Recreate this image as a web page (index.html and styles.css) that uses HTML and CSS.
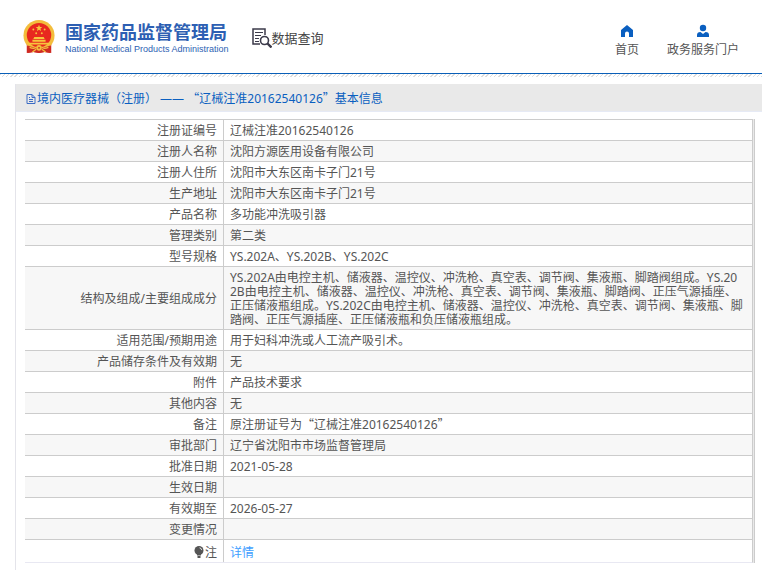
FILE: index.html
```html
<!DOCTYPE html>
<html lang="zh-CN">
<head>
  <meta charset="UTF-8">
  <title>国家药品监督管理局 - 数据查询</title>
  <meta name="viewport" content="width=device-width, initial-scale=1">
  <link rel="stylesheet" href="styles.css">
</head>
<body>

  <header class="header">
    <a class="logo" href="#">
      <svg class="emblem" viewBox="0 0 34 36" aria-hidden="true">
        <path fill="#cf2a22" d="M4 23h26v12l-7-1-6 1-6-1-7 1z"/>
        <circle cx="17" cy="16.500" r="16.500" fill="#f3bd3c"/>
        <circle cx="17" cy="16" r="13" fill="#e8281f"/>
        <path fill="#f7c53d" d="M17 5l1 2.400 2.500.1-2 1.600.7 2.500-2.200-1.400-2.200 1.400.7-2.500-2-1.600 2.500-.1z"/>
        <g fill="#f7c53d">
          <circle cx="11" cy="10" r="1"/><circle cx="23" cy="10" r="1"/>
          <circle cx="14" cy="14" r="1"/><circle cx="20" cy="14" r="1"/>
          <path d="M12 18h10l1 2H11zM10 21h14v2H10zM6 24h22v2H6z"/>
        </g>
        <path fill="#cf2a22" d="M5 27q6 3 12 1 6 2 12-1v8l-6-1-6 1-6-1-6 1z"/>
        <path fill="none" stroke="#f3bd3c" stroke-width="1.500" d="M7 29q5 2 7 0M27 29q-5 2-7 0M10 34l4-3M24 34l-4-3"/>
        <circle cx="17" cy="29.500" r="3" fill="#f3bd3c"/>
        <circle cx="17" cy="29.500" r="1" fill="#cf2a22"/>
      </svg>
      <span class="logo-text">
        <span class="logo-cn">国家药品监督管理局</span>
        <span class="logo-en">National Medical Products Administration</span>
      </span>
    </a>
    <a class="search" href="#">
      <svg class="search-icon" viewBox="0 0 20 20" fill="none" stroke="#3b3a4a" aria-hidden="true">
        <path stroke-width="1.500" d="M8 16H1V1h12v6"/>
        <path d="M3 4.500h8M3 7.500h6M3 10.500h4M3 13.500h4"/>
        <circle cx="12.500" cy="12.500" r="4" stroke-width="1.600"/>
        <path stroke-width="2.400" d="M15.500 15.500l4 4"/>
      </svg>
      数据查询
    </a>
    <nav class="nav">
      <a href="#">
        <svg viewBox="0 0 14 14" fill="#0a5fc0" aria-hidden="true"><path d="M7 1l6 5v7H9V9.500a2 2 0 0 0-4 0V13H1V6z"/></svg>
        首页
      </a>
      <a href="#">
        <svg viewBox="0 0 14 14" fill="#0a5fc0" aria-hidden="true"><circle cx="7" cy="4" r="3.200"/><path d="M1 13v-2q0-3 3.500-3L7 10l2.500-2Q13 8 13 11v2z"/></svg>
        政务服务门户
      </a>
    </nav>
  </header>
  <div class="stripes"></div>

  <main class="panel">
    <h1 class="panel-title">
      <svg class="doc-icon" viewBox="0 0 11 12" fill="none" stroke="#3c6cc4" aria-hidden="true">
        <path d="M1.500 1.500h5l3 3v6h-8zM6.500 1.500v3h3M3.500 4.500h1M3.500 6.500h4M3.500 8.500h4"/>
      </svg>
      <span>境内医疗器械（注册） —— <span class="cjk">“</span>辽械注准20162540126<span class="cjk">”</span>基本信息</span>
    </h1>

    <div class="table-wrap">
      <table class="info">
        <tr><th scope="row">注册证编号</th><td>辽械注准20162540126</td></tr>
        <tr><th scope="row">注册人名称</th><td>沈阳方源医用设备有限公司</td></tr>
        <tr><th scope="row">注册人住所</th><td>沈阳市大东区南卡子门21号</td></tr>
        <tr><th scope="row">生产地址</th><td>沈阳市大东区南卡子门21号</td></tr>
        <tr><th scope="row">产品名称</th><td>多功能冲洗吸引器</td></tr>
        <tr><th scope="row">管理类别</th><td>第二类</td></tr>
        <tr><th scope="row">型号规格</th><td>YS.202A、YS.202B、YS.202C</td></tr>
        <tr><th scope="row">结构及组成/主要组成成分</th><td>YS.202A由电控主机、储液器、温控仪、冲洗枪、真空表、调节阀、集液瓶、脚踏阀组成。YS.202B由电控主机、储液器、温控仪、冲洗枪、真空表、调节阀、集液瓶、脚踏阀、正压气源插座、正压储液瓶组成。YS.202C由电控主机、储液器、温控仪、冲洗枪、真空表、调节阀、集液瓶、脚踏阀、正压气源插座、正压储液瓶和负压储液瓶组成。</td></tr>
        <tr><th scope="row">适用范围/预期用途</th><td>用于妇科冲洗或人工流产吸引术。</td></tr>
        <tr><th scope="row">产品储存条件及有效期</th><td>无</td></tr>
        <tr><th scope="row">附件</th><td>产品技术要求</td></tr>
        <tr><th scope="row">其他内容</th><td>无</td></tr>
        <tr><th scope="row">备注</th><td>原注册证号为<span class="cjk">“</span>辽械注准20162540126<span class="cjk">”</span></td></tr>
        <tr><th scope="row">审批部门</th><td>辽宁省沈阳市市场监督管理局</td></tr>
        <tr><th scope="row">批准日期</th><td>2021-05-28</td></tr>
        <tr><th scope="row">生效日期</th><td></td></tr>
        <tr><th scope="row">有效期至</th><td>2026-05-27</td></tr>
        <tr><th scope="row">变更情况</th><td></td></tr>
        <tr class="note">
          <th scope="row"><svg class="bulb" viewBox="0 0 10 12" aria-hidden="true"><circle cx="5" cy="4.500" r="4.500" fill="#555"/><path fill="#555" d="M3 8h4v1.500H3zM3.500 10h3v2h-3z"/><path fill="none" stroke="#fff" stroke-width=".8" d="M5.500 1.800q2 .3 2.200 2.300"/></svg>注</th>
          <td><a href="#">详情</a></td>
        </tr>
      </table>
    </div>
  </main>

</body>
</html>
```
FILE: styles.css
```css
* {
  box-sizing: border-box;
}

body {
  margin: 0;
  display: flex;
  flex-direction: column;
  min-height: 100vh;
  background: #fff;
  color: #555;
  font: 12px/14px "Noto Sans", "Noto Sans CJK SC", sans-serif;
}

a {
  color: inherit;
  text-decoration: none;
}

/* full-width quotes, kept from growing the line */
.cjk {
  font-family: "Noto Sans CJK SC", sans-serif;
  line-height: 0;
}

/* header */
.header {
  display: flex;
  align-items: center;
  height: 74px;
  padding: 0 23px;
  border-bottom: 1px solid #0a5fb8;
}

.logo {
  display: flex;
  align-items: center;
  gap: 10px;
  color: #2d5fb3;
}

.emblem {
  width: 32px;
  height: 36px;
}

.logo-text {
  display: flex;
  flex-direction: column;
  padding-top: 2px;
  white-space: nowrap;
}

.logo-cn {
  font-size: 18px;
  line-height: 22px;
  font-weight: bold;
}

.logo-en {
  font: 9px/12px "Liberation Sans", sans-serif;
}

.search {
  display: flex;
  align-items: center;
  margin-left: 23px;
  padding-top: 2px;
  font-size: 13px;
  color: #444;
}

.search-icon {
  width: 20px;
  height: 20px;
}

.nav {
  display: flex;
  gap: 28px;
  margin-left: auto;
  padding-top: 8px;
}

.nav a {
  display: flex;
  flex-direction: column;
  align-items: center;
  gap: 5px;
}

.nav svg {
  width: 14px;
  height: 14px;
}

.stripes {
  height: 3px;
  background: repeating-linear-gradient(135deg, #ddd 0, #ddd 1px, #fff 1px, #fff 3px);
}

/* content */
.panel {
  flex: 1;
  margin: 7px 0 0 15px;
  border-left: 1px solid #e4e4ea;
}

.panel-title {
  display: flex;
  align-items: center;
  height: 28px;
  margin: 0;
  padding: 2px 0 0 9px;
  background: #e9e9e9;
  border-bottom: 1px solid #e6eaf5;
  color: #0a5fc0;
  font-size: 12px;
  font-weight: normal;
}

.doc-icon {
  width: 12px;
  height: 12px;
}

.table-wrap {
  margin: 7px 7px 0 9px;
  padding-right: 1px;
  border-right: 1px solid #ccc;
  background: #e9e9e9;
}

.info {
  width: 100%;
  border-collapse: separate;
  border-spacing: 0;
  border-right: 1px solid #ccc;
  border-bottom: 1px solid #e8e8f2;
  background: #fff;
}

.info tr:nth-child(even) {
  background: #f7f7f7;
}

.info th,
.info td {
  padding: 4px 6px 2px;
  border-top: 1px solid #ccc;
  font-weight: normal;
  word-break: break-all;
}

.info th {
  width: 199px;
  border-right: 1px solid #ccc;
  text-align: right;
}

.info td {
  height: 21px;
  padding-right: 8px;
  text-align: left;
}

.info .note th,
.info .note td {
  padding: 6px 6px 2px;
}

.info .note a {
  color: #409eff;
}

.bulb {
  width: 10px;
  height: 12px;
  margin-right: 1px;
  vertical-align: -1px;
}
```
